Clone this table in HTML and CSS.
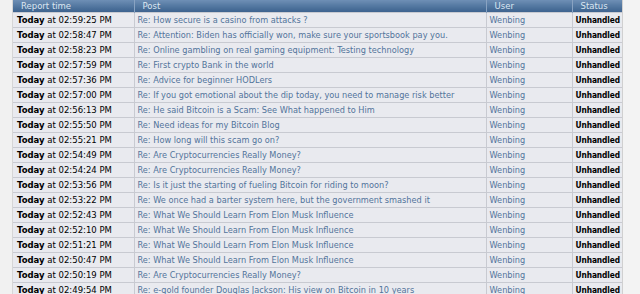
FILE: index.html
```html
<!DOCTYPE html>
<html>
<head>
<meta charset="utf-8">
<link rel="stylesheet" href="styles.css">
</head>
<body>
<div class="page">
  <div class="gutter gutter-left"></div>
  <table class="reports">
    <colgroup>
      <col class="c-time"><col class="c-post"><col class="c-user"><col class="c-status">
    </colgroup>
    <thead>
      <tr><th>Report time</th><th>Post</th><th>User</th><th>Status</th></tr>
    </thead>
    <tbody>
      <tr><td><b>Today</b> at 02:59:25 PM</td><td><a>Re: How secure is a casino from attacks ?</a></td><td><a>Wenbing</a></td><td><b class="st">Unhandled</b></td></tr>
      <tr><td><b>Today</b> at 02:58:47 PM</td><td><a>Re: Attention: Biden has officially won, make sure your sportsbook pay you.</a></td><td><a>Wenbing</a></td><td><b class="st">Unhandled</b></td></tr>
      <tr><td><b>Today</b> at 02:58:23 PM</td><td><a>Re: Online gambling on real gaming equipment: Testing technology</a></td><td><a>Wenbing</a></td><td><b class="st">Unhandled</b></td></tr>
      <tr><td><b>Today</b> at 02:57:59 PM</td><td><a>Re: First crypto Bank in the world</a></td><td><a>Wenbing</a></td><td><b class="st">Unhandled</b></td></tr>
      <tr><td><b>Today</b> at 02:57:36 PM</td><td><a>Re: Advice for beginner HODLers</a></td><td><a>Wenbing</a></td><td><b class="st">Unhandled</b></td></tr>
      <tr><td><b>Today</b> at 02:57:00 PM</td><td><a>Re: If you got emotional about the dip today, you need to manage risk better</a></td><td><a>Wenbing</a></td><td><b class="st">Unhandled</b></td></tr>
      <tr><td><b>Today</b> at 02:56:13 PM</td><td><a>Re: He said Bitcoin is a Scam: See What happened to Him</a></td><td><a>Wenbing</a></td><td><b class="st">Unhandled</b></td></tr>
      <tr><td><b>Today</b> at 02:55:50 PM</td><td><a>Re: Need ideas for my Bitcoin Blog</a></td><td><a>Wenbing</a></td><td><b class="st">Unhandled</b></td></tr>
      <tr><td><b>Today</b> at 02:55:21 PM</td><td><a>Re: How long will this scam go on?</a></td><td><a>Wenbing</a></td><td><b class="st">Unhandled</b></td></tr>
      <tr><td><b>Today</b> at 02:54:49 PM</td><td><a>Re: Are Cryptocurrencies Really Money?</a></td><td><a>Wenbing</a></td><td><b class="st">Unhandled</b></td></tr>
      <tr><td><b>Today</b> at 02:54:24 PM</td><td><a>Re: Are Cryptocurrencies Really Money?</a></td><td><a>Wenbing</a></td><td><b class="st">Unhandled</b></td></tr>
      <tr><td><b>Today</b> at 02:53:56 PM</td><td><a>Re: Is it just the starting of fueling Bitcoin for riding to moon?</a></td><td><a>Wenbing</a></td><td><b class="st">Unhandled</b></td></tr>
      <tr><td><b>Today</b> at 02:53:22 PM</td><td><a>Re: We once had a barter system here, but the government smashed it</a></td><td><a>Wenbing</a></td><td><b class="st">Unhandled</b></td></tr>
      <tr><td><b>Today</b> at 02:52:43 PM</td><td><a>Re: What We Should Learn From Elon Musk Influence</a></td><td><a>Wenbing</a></td><td><b class="st">Unhandled</b></td></tr>
      <tr><td><b>Today</b> at 02:52:10 PM</td><td><a>Re: What We Should Learn From Elon Musk Influence</a></td><td><a>Wenbing</a></td><td><b class="st">Unhandled</b></td></tr>
      <tr><td><b>Today</b> at 02:51:21 PM</td><td><a>Re: What We Should Learn From Elon Musk Influence</a></td><td><a>Wenbing</a></td><td><b class="st">Unhandled</b></td></tr>
      <tr><td><b>Today</b> at 02:50:47 PM</td><td><a>Re: What We Should Learn From Elon Musk Influence</a></td><td><a>Wenbing</a></td><td><b class="st">Unhandled</b></td></tr>
      <tr><td><b>Today</b> at 02:50:19 PM</td><td><a>Re: Are Cryptocurrencies Really Money?</a></td><td><a>Wenbing</a></td><td><b class="st">Unhandled</b></td></tr>
      <tr><td><b>Today</b> at 02:49:54 PM</td><td><a>Re: e-gold founder Douglas Jackson: His view on Bitcoin in 10 years</a></td><td><a>Wenbing</a></td><td><b class="st">Unhandled</b></td></tr>
    </tbody>
  </table>
  <div class="gutter gutter-right"></div>
</div>
</body>
</html>
```
FILE: styles.css
```css
html, body {
  margin: 0;
  padding: 0;
  background: #f4f4f4;
  overflow: hidden;
}
.page {
  display: flex;
  align-items: flex-start;
  width: 640px;
  height: 294px;
  overflow: hidden;
}
.gutter {
  align-self: stretch;
}
.gutter-left {
  width: 13px;
  background: #f1f1f1;
  border-right: 1px solid #d6d6d6;
  box-sizing: border-box;
}
.gutter-right {
  flex: 1;
  background: #f3f3f3;
  border-left: 1px solid #d0d0d0;
  box-sizing: border-box;
}
.reports {
  width: 609px;
  flex: none;
  border-collapse: collapse;
  table-layout: fixed;
  font-family: "DejaVu Sans", Verdana, sans-serif;
  font-size: 8.5px;
  color: #000;
  background: #e9eaef;
}
.c-time { width: 121px; }
.c-post { width: 352px; }
.c-user { width: 86px; }
.c-status { width: 50px; }
.reports thead tr { height: 12px; }
.reports th {
  padding: 0 0 0 8px;
  text-align: left;
  font-weight: normal;
  font-size: 8.5px;
  color: #dce6f1;
  background: linear-gradient(#6e8fb5, #4a6f99 70%, #3e638f);
  border-left: 1px solid #89a3c2;
  line-height: 10px;
  vertical-align: middle;
  white-space: nowrap;
  overflow: hidden;
}
.reports th:first-child { border-left: none; }
.reports tbody tr { height: 15px; }
.reports td {
  padding: 0 0 0 3px;
  border: 1px solid #c8cad1;
  line-height: 10px;
  white-space: nowrap;
  overflow: hidden;
  vertical-align: middle;
}
.reports td:first-child { border-left: none; padding-left: 4px; }
.reports td:last-child { border-right: none; padding-left: 3px; }
.reports td a {
  color: #52749b;
  text-decoration: none;
  font-size: 8.2px;
}
.reports b {
  font-weight: bold;
}
.reports .st {
  font-size: 8.3px;
  font-family: "DejaVu Sans Condensed", "DejaVu Sans", sans-serif;
  font-stretch: condensed;
  letter-spacing: -0.1px;
}
```
